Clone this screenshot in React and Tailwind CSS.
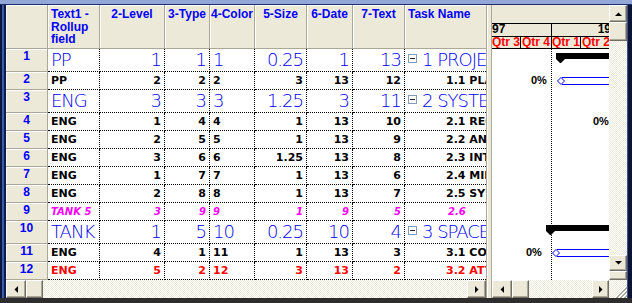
import React from 'react';

const sans = "font-['Liberation_Sans',Arial,sans-serif]";
const deja = "font-['DejaVu_Sans',sans-serif]";

const cols = [
    { label: <>Text1 -<br />Rollup<br />field</>, w: 'w-[52px]', head: 'text-left pl-[3px]', cell: 'text-left pl-[3px]' },
    { label: '2-Level', w: 'w-[65px]', head: 'text-center', cell: 'text-right pr-[3px]' },
    { label: '3-Type', w: 'w-[45px]', head: 'text-center', cell: 'text-right pr-[3px]' },
    { label: '4-Color', w: 'w-[45px]', head: 'text-center', cell: 'text-left pl-[3px]' },
    { label: '5-Size', w: 'w-[52px]', head: 'text-center', cell: 'text-right pr-[3px]' },
    { label: '6-Date', w: 'w-[46px]', head: 'text-center', cell: 'text-right pr-[3px]' },
    { label: '7-Text', w: 'w-[52px]', head: 'text-center', cell: 'text-right pr-[3px]' },
];

const rows = [
    { n: 1, kind: 'big', c: ['PP', '1', '1', '1', '0.25', '1', '13'], task: '1 PROJECT' },
    { n: 2, kind: 'bold', c: ['PP', '2', '2', '2', '3', '13', '12'], task: '1.1 PLANNING' },
    { n: 3, kind: 'big', c: ['ENG', '3', '3', '3', '1.25', '3', '11'], task: '2 SYSTEM' },
    { n: 4, kind: 'bold', c: ['ENG', '1', '4', '4', '1', '13', '10'], task: '2.1 REQUIREMENTS' },
    { n: 5, kind: 'bold', c: ['ENG', '2', '5', '5', '1', '13', '9'], task: '2.2 ANALYSIS' },
    { n: 6, kind: 'bold', c: ['ENG', '3', '6', '6', '1.25', '13', '8'], task: '2.3 INTEGRATION' },
    { n: 7, kind: 'bold', c: ['ENG', '1', '7', '7', '1', '13', '6'], task: '2.4 MILESTONE' },
    { n: 8, kind: 'bold', c: ['ENG', '2', '8', '8', '1', '13', '7'], task: '2.5 SYSTEM TEST' },
    { n: 9, kind: 'pink', c: ['TANK 5', '3', '9', '9', '1', '9', '5'], task: '2.6' },
    { n: 10, kind: 'big', c: ['TANK', '1', '5', '10', '0.25', '10', '4'], task: '3 SPACECRAFT' },
    { n: 11, kind: 'bold', c: ['ENG', '4', '1', '11', '1', '13', '3'], task: '3.1 CONCEPT' },
    { n: 12, kind: 'red', c: ['ENG', '5', '2', '12', '3', '13', '2'], task: '3.2 ATTITUDE' },
];

const kinds = {
    big: { h: 'h-[23px]', text: `${deja} font-extralight text-[18px] leading-[22px] tracking-[-1px] text-[#0000ff]` },
    bold: { h: 'h-[18px]', text: `${deja} font-bold text-[11px] leading-[17px] text-black` },
    red: { h: 'h-[18px]', text: `${deja} font-bold text-[11px] leading-[17px] text-[#ff0000]` },
    pink: { h: 'h-[18px]', text: `${deja} font-bold italic text-[10px] leading-[17px] text-[#ff00ff]` },
};

const raised = 'box-border bg-[#ece9d8] border border-t-white border-l-white border-r-[#716f64] border-b-[#716f64] shadow-[inset_-1px_-1px_0_#aca899]';
const dither = 'bg-[repeating-conic-gradient(#ece9d8_0%_25%,#ffffff_0%_50%)] bg-[length:2px_2px]';

const Arrow = ({ dir }) => {
    const pts = {
        up: '0,4 7,4 3.5,0.5',
        down: '0,0 7,0 3.5,3.5',
        left: '4,0 4,7 0.5,3.5',
        right: '0,0 0,7 3.5,3.5',
    }[dir];
    const vertical = dir === 'up' || dir === 'down';
    return (
        <svg width={vertical ? 7 : 4} height={vertical ? 4 : 7}>
            <polygon points={pts} fill="#000" />
        </svg>
    );
};

const Btn = ({ className = '', children }) => (
    <div className={`flex-none flex items-center justify-center ${raised} ${className}`}>{children}</div>
);

const MinusBox = () => (
    <div className="flex-none w-[9px] h-[9px] mt-[5px] ml-[3px] box-border border border-[#7f9db9] bg-white flex items-center justify-center">
        <div className="w-[5px] h-px bg-[#222]" />
    </div>
);

const Table = () => (
    <div className="flex flex-col w-[480px] flex-none bg-white">
        <div className={`flex h-[44px] flex-none ${sans} font-bold text-[12px] leading-[12.5px] text-[#0000ff]`}>
            <div className="w-[42px] flex-none box-border border-r border-b border-[#aca899] bg-[#ece9d8] shadow-[inset_1px_1px_0_#ffffff]" />
            {cols.map((col, i) => (
                <div key={i} className={`${col.w} flex-none box-border border-r border-b border-[#aca899] bg-[#ece9d8] shadow-[inset_1px_1px_0_#ffffff] pt-[3px] whitespace-nowrap overflow-hidden ${col.head}`}>
                    {col.label}
                </div>
            ))}
            <div className="w-[81px] flex-none box-border border-b border-[#aca899] bg-[#ece9d8] shadow-[inset_1px_1px_0_#ffffff] pt-[3px] pl-[3px]">
                Task Name
            </div>
        </div>
        {rows.map((row) => {
            const k = kinds[row.kind];
            return (
                <div key={row.n} className={`flex flex-none ${k.h}`}>
                    <div className={`w-[42px] flex-none box-border border-r border-b border-[#aca899] bg-[#ece9d8] shadow-[inset_1px_1px_0_#ffffff] text-center ${sans} font-bold text-[12px] leading-[13px] pt-[1px] text-[#0000ff]`}>
                        {row.n}
                    </div>
                    {cols.map((col, i) => (
                        <div key={i} className={`${col.w} flex-none box-border border-r border-b border-dotted border-black whitespace-nowrap overflow-hidden ${col.cell} ${k.text}`}>
                            {row.c[i]}
                        </div>
                    ))}
                    <div className={`w-[81px] flex-none box-border border-b border-dotted border-black whitespace-nowrap overflow-hidden flex ${k.text}`}>
                        {row.kind === 'big' ? (
                            <>
                                <MinusBox />
                                <span className="ml-[5px]">{row.task}</span>
                            </>
                        ) : (
                            <span className={row.kind === 'pink' ? 'pl-[43px]' : 'pl-[41px]'}>{row.task}</span>
                        )}
                    </div>
                </div>
            );
        })}
    </div>
);

const SummaryBar = ({ left }) => (
    <svg className="absolute top-[4px]" style={{ left }} width={117 - left} height={11}>
        <rect x="0" y="0" width={117 - left} height="6" fill="#000" />
        <polygon points="0,6 9,6 5,10 4,10" fill="#000" />
    </svg>
);

const TaskBar = ({ left }) => (
    <svg className="absolute top-[5px]" style={{ left }} width={117 - left} height={8}>
        <line x1="5" y1="0.5" x2={117 - left} y2="0.5" stroke="#0000ff" />
        <line x1="5" y1="7.5" x2={117 - left} y2="7.5" stroke="#0000ff" />
        <polygon points="0.5,4 4,0.5 7.5,4 4,7.5" fill="#fff" stroke="#0000ff" />
    </svg>
);

const Pct = ({ left }) => (
    <span className={`absolute top-0 ${sans} font-bold text-[11px] leading-[17px] text-black`} style={{ left }}>0%</span>
);

const ganttContent = {
    1: <SummaryBar left={64} />,
    2: <><Pct left={39} /><TaskBar left={65} /></>,
    4: <Pct left={101} />,
    10: <SummaryBar left={54} />,
    11: <><Pct left={34} /><TaskBar left={60} /></>,
};

const Gantt = () => (
    <div className="flex flex-col w-[117px] flex-none overflow-hidden">
        <div className={`flex flex-col h-[44px] flex-none bg-[#ece9d8] ${sans} font-bold text-[12px]`}>
            <div className="h-[18px] flex-none" />
            <div className="h-[13px] flex-none box-border border-t border-black flex overflow-hidden">
                <div className="flex flex-none -ml-[59px]">
                    <div className="w-[119px] flex-none box-border border-r border-black text-center leading-[10px]">1997</div>
                    <div className="w-[118px] flex-none text-center leading-[10px]">1998</div>
                </div>
            </div>
            <div className="h-[13px] flex-none box-border border-t border-b border-black flex overflow-hidden text-[#ff0000] leading-[11px]">
                <div className="w-[29px] flex-none box-border border-r border-black text-center whitespace-nowrap">Qtr 3</div>
                <div className="w-[31px] flex-none box-border border-r border-black text-center whitespace-nowrap">Qtr 4</div>
                <div className="w-[29px] flex-none box-border border-r border-black text-center whitespace-nowrap">Qtr 1</div>
                <div className="w-[30px] flex-none text-center whitespace-nowrap">Qtr 2</div>
            </div>
        </div>
        <div className="relative flex-1 flex flex-col bg-white">
            {rows.map((row) => (
                <div key={row.n} className={`relative flex-none ${kinds[row.kind].h}`}>
                    {ganttContent[row.n]}
                </div>
            ))}
            <div className="absolute left-[59px] top-0 bottom-0 border-l border-dotted border-black" />
        </div>
    </div>
);

const VScroll = () => (
    <div className="flex flex-col w-[18px] flex-none">
        <Btn className="h-[17px]"><Arrow dir="up" /></Btn>
        <Btn className="h-[19px]" />
        <div className={`flex-1 ${dither}`} />
        <Btn className="h-[16px]"><Arrow dir="down" /></Btn>
        <Btn className="h-[9px]" />
    </div>
);

const HScroll = ({ width, endBtn = 'w-[19px]' }) => (
    <div className={`flex h-[18px] flex-none ${width}`}>
        <Btn className="w-[20px] h-full"><Arrow dir="left" /></Btn>
        <Btn className="w-[17px] h-full" />
        <div className={`flex-1 ${dither}`} />
        <Btn className={`${endBtn} h-full`}><Arrow dir="right" /></Btn>
    </div>
);

const Splitter = () => (
    <div className="w-[6px] flex-none box-border border-l border-r border-[#aca899] bg-[#ece9d8] shadow-[inset_1px_0_0_#ffffff]" />
);

const Grip = () => (
    <div className={`w-[18px] h-[18px] flex-none ${dither}`}>
        <svg width="18" height="18">
            {[4, 8, 12].map((o) => (
                <g key={o}>
                    <line x1={17 - o + 1} y1="18" x2="18" y2={17 - o + 1} stroke="#ffffff" />
                    <line x1={17 - o + 2} y1="18" x2="18" y2={17 - o + 2} stroke="#aca899" />
                    <line x1={17 - o + 3} y1="18" x2="18" y2={17 - o + 3} stroke="#aca899" />
                </g>
            ))}
        </svg>
    </div>
);

export default function App() {
    return (
        <div className="w-[632px] h-[303px] flex flex-col bg-[#ece9d8] overflow-hidden">
            <div className="h-[4px] flex-none bg-[#93a6d8]" />
            <div className="h-px flex-none bg-[#1c2f6b]" />
            <div className="flex flex-1 min-h-0">
                <div className="flex w-[6px] flex-none">
                    <div className="w-[2px] bg-[#0b1640]" />
                    <div className="w-[2px] bg-[#3d5ca8]" />
                    <div className="w-[2px] bg-[#0e1a4a]" />
                </div>
                <div className="flex flex-col w-[621px] flex-none">
                    <div className="flex h-[275px] flex-none">
                        <Table />
                        <Splitter />
                        <Gantt />
                        <VScroll />
                    </div>
                    <div className="flex h-[18px] flex-none">
                        <HScroll width="w-[480px]" />
                        <Splitter />
                        <HScroll width="w-[117px]" endBtn="w-[17px]" />
                        <Grip />
                    </div>
                </div>
                <div className="flex w-[5px] flex-none">
                    <div className="w-px bg-[#3b5293]" />
                    <div className="w-[4px] bg-[#0c1435]" />
                </div>
            </div>
            <div className="h-[5px] flex-none bg-[#2d2d2d]" />
        </div>
    );
}
